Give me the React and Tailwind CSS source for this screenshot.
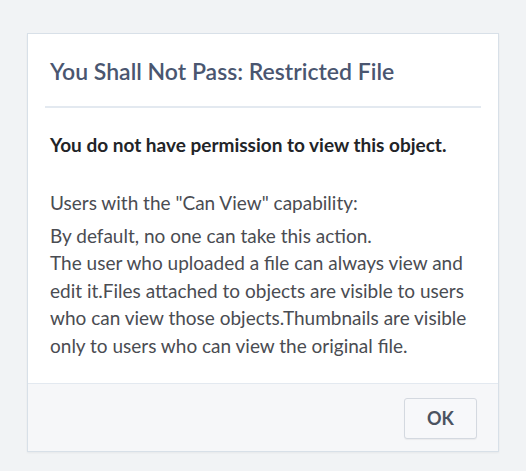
export default function App() {
  return (
    <div className="min-h-screen bg-[#f1f3f5] pt-[33px] pl-[27px]" style={{ fontFamily: 'Lato, "Liberation Sans", sans-serif' }}>
      <div className="w-[472px] bg-white border border-[#d8e0e8] shadow-[0_1px_2px_rgba(0,0,0,0.05)]">
        <div className="px-[17px] pt-[25px]">
          <h1 className="pl-[5px] pb-[23px] border-b-2 border-[#e3e9f0] text-[23px] leading-[24px] font-semibold text-[#4a5670]">
            You Shall Not Pass: Restricted File
          </h1>
        </div>
        <div className="px-[22px] pt-[23px] pb-[24px] text-[19px] leading-[27.5px] text-[#4a4c52]">
          <p className="font-bold leading-[28px] text-[#222428]">You do not have permission to view this object.</p>
          <p className="mt-[30px]">Users with the "Can View" capability:</p>
          <p className="mt-[5px]">
            By default, no one can take this action.
            <br />
            The user who uploaded a file can always view and edit it.Files attached to objects are visible to users who can view those objects.Thumbnails are visible only to users who can view the original file.
          </p>
        </div>
        <div className="flex justify-end border-t border-[#e3e9f0] bg-[#f6f7f9] pt-[14px] pb-[12px] pr-[21px]">
          <button className="h-[41px] w-[73px] rounded-[3px] border border-[#d4d9e0] bg-[#f7f8fa] text-[18px] font-bold text-[#4b5361] shadow-[0_1px_1px_rgba(0,0,0,0.05)]">
            OK
          </button>
        </div>
      </div>
    </div>
  )
}
